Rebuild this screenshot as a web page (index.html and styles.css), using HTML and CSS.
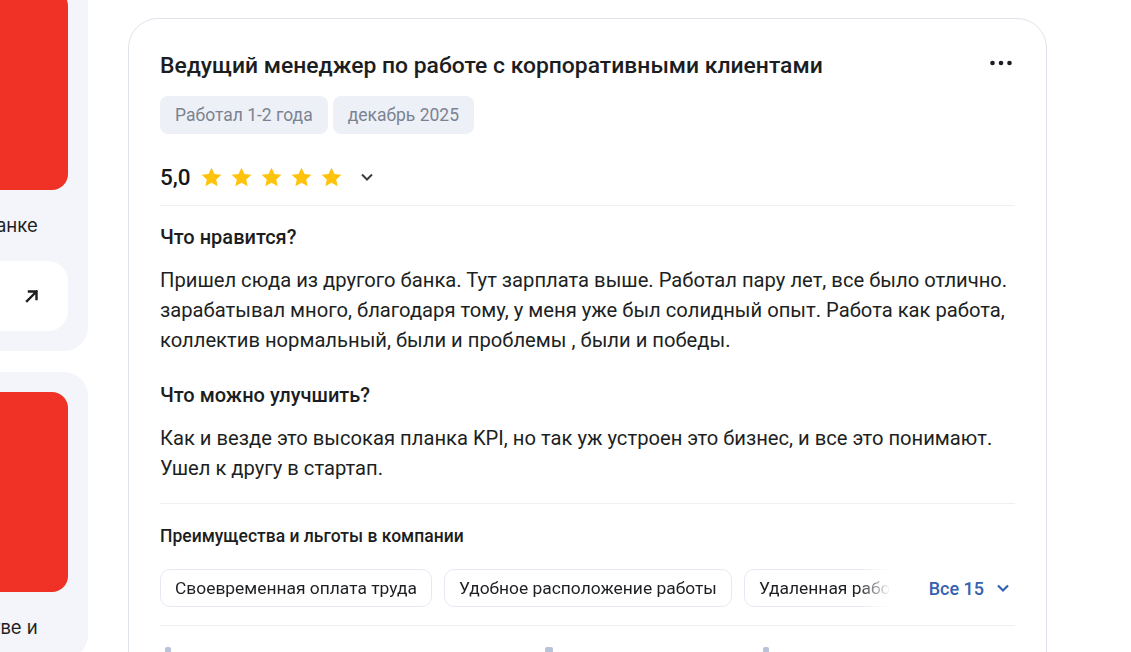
FILE: index.html
```html
<!DOCTYPE html>
<html lang="ru">
<head>
<meta charset="utf-8">
<title>Отзыв</title>
<link rel="stylesheet" href="styles.css">
</head>
<body>
<div class="page">
  <aside class="sidebar">
    <div class="promo">
      <div class="promo-img"></div>
      <div class="promo-text">Карьера в банке</div>
      <a class="promo-btn" href="#">
        <svg width="16" height="16" viewBox="0 0 16 16"><path d="M3 13 L12.5 3.5 M5 3.5 H12.5 V11" fill="none" stroke="#1d1d1f" stroke-width="2.4" stroke-linecap="square"/></svg>
      </a>
    </div>
    <div class="promo">
      <div class="promo-img"></div>
      <div class="promo-text">О партнёрстве и</div>
    </div>
  </aside>

  <main class="card">
    <div class="card-head">
      <h1 class="title">Ведущий менеджер по работе с корпоративными клиентами</h1>
      <button class="more" aria-label="Ещё">
        <svg width="22" height="6" viewBox="0 0 22 6"><circle cx="2.5" cy="3" r="2.3" fill="#1b1d22"/><circle cx="11" cy="3" r="2.3" fill="#1b1d22"/><circle cx="19.5" cy="3" r="2.3" fill="#1b1d22"/></svg>
      </button>
    </div>
    <div class="tags">
      <span class="tag">Работал 1-2 года</span>
      <span class="tag">декабрь 2025</span>
    </div>
    <div class="rating">
      <span class="score">5,0</span>
      <span class="stars">
        <svg class="star" viewBox="0 0 24 24"><path d="M12 1.8l3.1 6.6 7.2.8-5.4 4.9 1.5 7.1L12 17.6l-6.4 3.6 1.5-7.1L1.7 9.2l7.2-.8z"/></svg>
        <svg class="star" viewBox="0 0 24 24"><path d="M12 1.8l3.1 6.6 7.2.8-5.4 4.9 1.5 7.1L12 17.6l-6.4 3.6 1.5-7.1L1.7 9.2l7.2-.8z"/></svg>
        <svg class="star" viewBox="0 0 24 24"><path d="M12 1.8l3.1 6.6 7.2.8-5.4 4.9 1.5 7.1L12 17.6l-6.4 3.6 1.5-7.1L1.7 9.2l7.2-.8z"/></svg>
        <svg class="star" viewBox="0 0 24 24"><path d="M12 1.8l3.1 6.6 7.2.8-5.4 4.9 1.5 7.1L12 17.6l-6.4 3.6 1.5-7.1L1.7 9.2l7.2-.8z"/></svg>
        <svg class="star" viewBox="0 0 24 24"><path d="M12 1.8l3.1 6.6 7.2.8-5.4 4.9 1.5 7.1L12 17.6l-6.4 3.6 1.5-7.1L1.7 9.2l7.2-.8z"/></svg>
      </span>
      <svg class="chev" width="14" height="10" viewBox="0 0 14 10"><path d="M2 2.5 L7 7.5 L12 2.5" fill="none" stroke="#3a3d44" stroke-width="2"/></svg>
    </div>
    <hr class="sep">
    <section class="block">
      <h2 class="q">Что нравится?</h2>
      <p class="answer">Пришел сюда из другого банка. Тут зарплата выше. Работал пару лет, все было отлично. зарабатывал много, благодаря тому, у меня уже был солидный опыт. Работа как работа, коллектив нормальный, были и проблемы , были и победы.</p>
    </section>
    <section class="block block-2">
      <h2 class="q">Что можно улучшить?</h2>
      <p class="answer">Как и везде это высокая планка KPI, но так уж устроен это бизнес, и все это понимают. Ушел к другу в стартап.</p>
    </section>
    <hr class="sep sep-2">
    <h3 class="benefits-title">Преимущества и льготы в компании</h3>
    <div class="benefits">
      <div class="chips">
        <span class="chip">Своевременная оплата труда</span>
        <span class="chip">Удобное расположение работы</span>
        <span class="chip">Удаленная работа</span>
      </div>
      <a class="all" href="#">Все 15
        <svg width="14" height="10" viewBox="0 0 14 10"><path d="M2 2.5 L7 7.5 L12 2.5" fill="none" stroke="#3562ae" stroke-width="2.2"/></svg>
      </a>
    </div>
    <hr class="sep sep-3">
    <div class="footer-row">
      <span class="f-ico"></span>
      <span class="f-ico f-ico-2"></span>
      <span class="f-ico f-ico-3"></span>
    </div>
  </main>
</div>
</body>
</html>
```

FILE: styles.css
```css
* { box-sizing: border-box; }
html, body { margin: 0; padding: 0; background: #ffffff; overflow: hidden; }
body { font-family: Roboto, "Liberation Sans", sans-serif; color: #1d1f23; }

.page {
  display: flex;
  align-items: flex-start;
  gap: 40px;
  height: 652px;
}

.sidebar {
  flex: 0 0 auto;
  width: 221px;
  margin-left: -133px;
  margin-top: -30px;
  display: flex;
  flex-direction: column;
  gap: 21px;
}

.promo {
  background: #f4f5fa;
  padding: 20px;
  border-radius: 24px;
}

.promo-img {
  height: 200px;
  background: #f03226;
  border-radius: 16px;
}

.promo-text {
  font-family: Inter, "Open Sans", sans-serif;
  font-size: 18.5px;
  line-height: 24px;
  color: #1d1f23;
  margin-top: 23px;
  white-space: nowrap;
}

.promo-btn {
  margin-top: 24px;
  height: 70px;
  background: #ffffff;
  border-radius: 20px;
  display: flex;
  align-items: center;
  justify-content: flex-end;
  padding-right: 28px;
}

.card {
  flex: 0 0 919px;
  margin-top: 18px;
  border: 1px solid #dfe3eb;
  border-radius: 30px;
  padding: 33px 31px 40px 31px;
  min-height: 700px;
}

.card-head {
  display: flex;
  justify-content: space-between;
  align-items: flex-start;
}

.title {
  margin: 0;
  font-size: 22.9px;
  line-height: 28px;
  font-weight: 500;
  color: #1b1d21;
}

.more {
  border: 0;
  background: none;
  padding: 0;
  margin: 8px 3px 0 0;
  cursor: pointer;
  display: flex;
}

.tags {
  display: flex;
  gap: 5px;
  margin-top: 16px;
}

.tag {
  height: 38px;
  display: inline-flex;
  align-items: center;
  padding: 0 15px;
  background: #edf0f7;
  border-radius: 8px;
  font-size: 17.5px;
  color: #7b8391;
}

.rating {
  display: flex;
  align-items: center;
  height: 32px;
  margin-top: 27px;
}

.score {
  font-size: 22.5px;
  font-weight: 500;
  color: #15171a;
  margin-right: 9px;
}

.stars { display: flex; gap: 7px; }

.star {
  width: 23px;
  height: 23px;
  fill: #ffc30b;
}

.chev { margin-left: 17px; }

.sep {
  border: 0;
  border-top: 1px solid #eef0f4;
  margin: 12px 0 0 0;
}

.block { margin-top: 18px; }
.block-2 { margin-top: 27px; }

.q {
  margin: 0;
  font-size: 20px;
  line-height: 26px;
  font-weight: 500;
  color: #1b1d21;
}

.answer {
  margin: 15px 0 0 0;
  font-size: 20.2px;
  line-height: 30px;
  color: #1d1f23;
}

.sep-2 { margin-top: 20px; }

.benefits-title {
  margin: 21px 0 0 0;
  font-size: 17.5px;
  line-height: 22px;
  font-weight: 500;
  color: #1b1d21;
}

.benefits {
  display: flex;
  align-items: center;
  margin-top: 22px;
}

.chips {
  flex: 0 0 734px;
  display: flex;
  gap: 12px;
  overflow: hidden;
  -webkit-mask-image: linear-gradient(to right, #000 calc(100% - 36px), transparent calc(100% - 4px));
  mask-image: linear-gradient(to right, #000 calc(100% - 36px), transparent calc(100% - 4px));
}

.chip {
  flex: 0 0 auto;
  height: 38px;
  display: inline-flex;
  align-items: center;
  padding: 0 14px;
  border: 1px solid #e6e9f1;
  border-radius: 10px;
  font-size: 17.4px;
  color: #1d1f23;
  white-space: nowrap;
}

.all {
  margin-left: auto;
  margin-right: 5px;
  display: inline-flex;
  align-items: center;
  gap: 12px;
  font-size: 18px;
  font-weight: 500;
  color: #3562ae;
  text-decoration: none;
}

.sep-3 { margin-top: 18px; }

.footer-row {
  display: flex;
  margin-top: 21px;
  padding-left: 5px;
}

.f-ico {
  width: 6px;
  height: 6px;
  border-radius: 2px;
  background: #b8c2d8;
}
.f-ico-2 { margin-left: 374px; width: 8px; }
.f-ico-3 { margin-left: 210px; }
```
